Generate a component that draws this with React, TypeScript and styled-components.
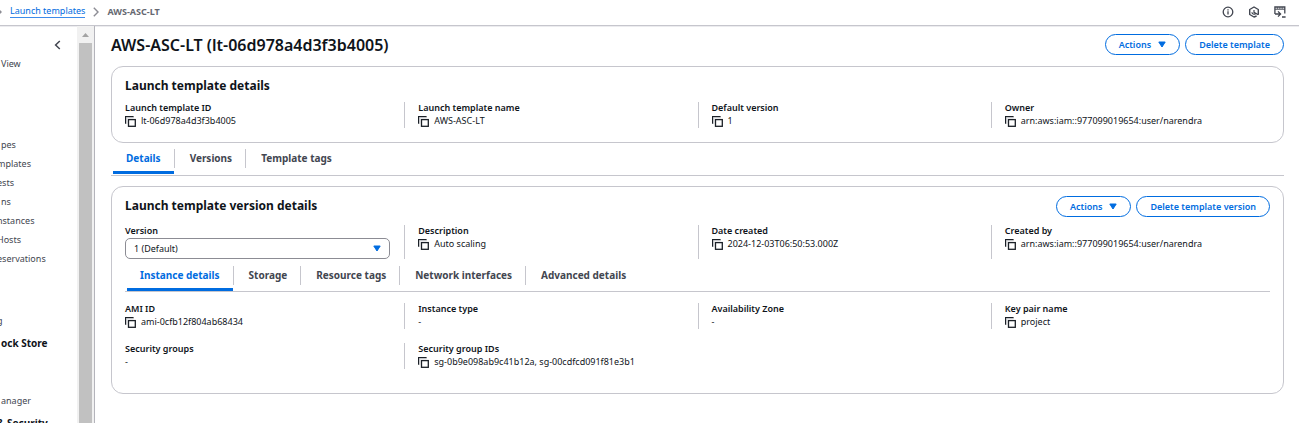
import React, { useState } from "react";
import styled, { createGlobalStyle, css } from "styled-components";

const GlobalStyle = createGlobalStyle`
  * { box-sizing: border-box; }
  body {
    margin: 0;
    background: #fff;
    color: #0f141a;
    font-family: "Noto Sans", "Open Sans", sans-serif;
    font-size: 9px;
    line-height: 13px;
  }
  button, select { font: inherit; color: inherit; }
  h1, h2, dl, dd, dt, ul, ol { margin: 0; padding: 0; }
  ul, ol { list-style: none; }
`;

const Page = styled.div`
  display: flex;
  flex-direction: column;
  height: 100vh;
  overflow: hidden;
`;

const TopBar = styled.header`
  display: flex;
  flex: none;
  align-items: center;
  justify-content: space-between;
  height: 26px;
  padding: 0 13px 2px 0;
  border-bottom: 1px solid #c6c6cd;
  box-shadow: 0 1px 0 #ececef;
`;

const Crumbs = styled.ol`
  display: flex;
  align-items: center;
`;

const Crumb = styled.li`
  display: flex;
  align-items: center;
  color: #656871;
  font-weight: 700;
`;

const CrumbLink = styled.a`
  color: #006ce0;
  font-weight: 400;
  text-decoration: none;
  border-bottom: 1px solid #3d8bea;
  line-height: 12px;
`;

const CrumbChevron = styled.svg`
  width: 6px;
  height: 10px;
  margin: 0 8px;
`;

const ClippedChevron = styled(CrumbChevron)`
  margin: 0 8px 0 -4px;
`;

const Tools = styled.div`
  display: flex;
  gap: 14px;
`;

const IconButton = styled.button`
  display: flex;
  padding: 0;
  border: 0;
  background: none;
  color: #424650;
  cursor: pointer;
`;

const Body = styled.div`
  display: flex;
  flex: 1;
  min-height: 0;
`;

const Sidebar = styled.aside`
  display: flex;
  flex: none;
  border-right: 1px solid #b4b4bb;
`;

const SideNav = styled.nav`
  width: 77px;
  overflow: hidden;
  color: #424650;
`;

const Collapse = styled.div`
  display: flex;
  justify-content: flex-end;
  padding: 14px 16px 4px 0;
`;

const NavGroup = styled.ul<{ $before?: number }>`
  padding-top: ${(p) => p.$before ?? 0}px;
`;

const NavItem = styled.li<{ $cut?: boolean }>`
  line-height: 19px;
  white-space: nowrap;
  text-indent: ${(p) => (p.$cut ? "-3px" : "1px")};
`;

const NavHeading = styled(NavItem)`
  padding-top: 4px;
  color: #0f141a;
  font-size: 10px;
  font-weight: 700;
`;

const NavLink = styled.a`
  color: inherit;
  text-decoration: none;
`;

const ScrollTrack = styled.div`
  display: flex;
  flex-direction: column;
  align-items: center;
  width: 17px;
  padding-top: 7px;
  background: #f1f1f1;
`;

const ScrollThumb = styled.div`
  flex: 1;
  width: 13px;
  margin-top: 6px;
  background: #c1c1c1;
`;

const Main = styled.main`
  flex: 1;
  min-width: 0;
  padding: 8px 15px 0 16px;
`;

const TitleRow = styled.div`
  display: flex;
  align-items: flex-start;
  justify-content: space-between;
`;

const PageTitle = styled.h1`
  font-size: 16px;
  font-weight: 600;
  line-height: 22px;
`;

const ButtonGroup = styled.div`
  display: flex;
  gap: 5px;
`;

const PillButton = styled.button`
  display: flex;
  align-items: center;
  gap: 7px;
  height: 21px;
  padding: 0 13px 1px;
  border: 1px solid #006ce0;
  border-radius: 11px;
  background: #fff;
  color: #006ce0;
  font-weight: 600;
  white-space: nowrap;
  cursor: pointer;
`;

const Card = styled.section<{ $bottom: number }>`
  margin-top: 10px;
  padding: 9px 13px ${(p) => p.$bottom}px;
  border: 1px solid #c6c6cd;
  border-radius: 12px;
`;

const CardTitle = styled.h2`
  font-size: 12px;
  font-weight: 700;
  line-height: 20px;
`;

const Columns = styled.dl<{ $top: number }>`
  display: grid;
  grid-template-columns: repeat(4, minmax(0, 1fr));
  column-gap: 28px;
  row-gap: 14px;
  padding-top: ${(p) => p.$top}px;
`;

const Field = styled.div<{ $divided?: boolean }>`
  ${(p) =>
    p.$divided &&
    css`
      margin-left: -14px;
      padding-left: 13px;
      border-left: 1px solid #c6c6cd;
    `}
`;

const Term = styled.dt`
  font-weight: 600;
  line-height: 12px;
`;

const Value = styled.dd`
  display: flex;
  align-items: flex-end;
  gap: 5px;
  padding-bottom: 1px;
  white-space: nowrap;
`;

const SelectBox = styled.dd`
  position: relative;
  padding-top: 1px;
`;

const Select = styled.select`
  display: block;
  width: 100%;
  height: 21px;
  padding: 0 20px 1px 8px;
  border: 1px solid #8c8c94;
  border-radius: 5px;
  background: #fff;
  appearance: none;
`;

const SelectArrow = styled.span`
  position: absolute;
  top: 8px;
  right: 9px;
  display: flex;
  color: #006ce0;
  pointer-events: none;
`;

const TabList = styled.div<{ $top: number; $bottom: number }>`
  display: flex;
  padding: ${(p) => p.$top}px 0 ${(p) => p.$bottom}px;
  border-bottom: 1px solid #c6c6cd;
`;

const Tab = styled.button<{ $active: boolean }>`
  margin-left: 2px;
  padding: 0;
  border: 0;
  background: none;
  color: ${(p) => (p.$active ? "#006ce0" : "#424650")};
  font-size: 10px;
  font-weight: 700;
  cursor: pointer;

  &::after {
    content: "";
    display: block;
    height: 3px;
    margin: 3px 1px 0 0;
    background: ${(p) => (p.$active ? "#006ce0" : "transparent")};
  }
`;

const TabLabel = styled.span`
  display: block;
  padding: 0 13px;
  border-right: 1px solid #c6c6cd;
  line-height: 19px;

  ${Tab}:last-child & {
    border-right-color: transparent;
  }
`;

function CaretDown() {
  return (
    <svg width="8" height="7" viewBox="0 0 8 7" aria-hidden="true">
      <path d="M.8 1h6.4L4 6z" fill="currentColor" stroke="currentColor" strokeLinejoin="round" />
    </svg>
  );
}

function CopyIcon() {
  return (
    <svg width="11" height="11" viewBox="0 0 11 11" fill="none" stroke="#1b2027" aria-hidden="true">
      <path d="M.6 7.8V.6h8" strokeWidth="1.2" />
      <path d="M1.7 7.8V1.7h6.9" stroke="#c3c5ca" strokeWidth=".9" />
      <rect x="3.5" y="3.6" width="6.8" height="6.7" strokeWidth="1.3" />
    </svg>
  );
}

function Chevron() {
  return <path d="M.8.8 5 5 .8 9.2" fill="none" stroke="#8c8c94" strokeWidth="1.4" />;
}

type FieldData = { term: string; value: string; copy?: boolean };

function Pair({ term, value, copy, divided }: FieldData & { divided: boolean }) {
  return (
    <Field $divided={divided}>
      <Term>{term}</Term>
      <Value>
        {copy && (
          <IconButton aria-label={`Copy ${term}`}>
            <CopyIcon />
          </IconButton>
        )}
        {value}
      </Value>
    </Field>
  );
}

type TabsProps = { labels: string[]; name: string; top: number; bottom: number };

function Tabs({ labels, name, top, bottom }: TabsProps) {
  const [active, setActive] = useState(0);
  return (
    <TabList role="tablist" aria-label={name} $top={top} $bottom={bottom}>
      {labels.map((label, i) => (
        <Tab key={label} role="tab" aria-selected={i === active} $active={i === active} onClick={() => setActive(i)}>
          <TabLabel>{label}</TabLabel>
        </Tab>
      ))}
    </TabList>
  );
}

const owner = "arn:aws:iam::977099019654:user/narendra";

const templateFields: FieldData[] = [
  { term: "Launch template ID", value: "lt-06d978a4d3f3b4005", copy: true },
  { term: "Launch template name", value: "AWS-ASC-LT", copy: true },
  { term: "Default version", value: "1", copy: true },
  { term: "Owner", value: owner, copy: true },
];

const versionFields: FieldData[] = [
  { term: "Description", value: "Auto scaling", copy: true },
  { term: "Date created", value: "2024-12-03T06:50:53.000Z", copy: true },
  { term: "Created by", value: owner, copy: true },
];

const instanceFields: FieldData[] = [
  { term: "AMI ID", value: "ami-0cfb12f804ab68434", copy: true },
  { term: "Instance type", value: "-" },
  { term: "Availability Zone", value: "-" },
  { term: "Key pair name", value: "project", copy: true },
  { term: "Security groups", value: "-" },
  { term: "Security group IDs", value: "sg-0b9e098ab9c41b12a, sg-00cdfcd091f81e3b1", copy: true },
];

const instanceLinks = [
  { text: "pes" },
  { text: "mplates", cut: true },
  { text: "ests", cut: true },
  { text: "ns" },
  { text: "nstances", cut: true },
  { text: "Hosts", cut: true },
  { text: "eservations", cut: true },
];

function NavEntry({ text, cut }: { text: string; cut?: boolean }) {
  return (
    <NavItem $cut={cut}>
      <NavLink href="#">{text}</NavLink>
    </NavItem>
  );
}

export default function App() {
  return (
    <Page>
      <GlobalStyle />
      <TopBar>
        <Crumbs>
          <Crumb>
            <ClippedChevron viewBox="0 0 6 10" aria-hidden="true">
              <Chevron />
            </ClippedChevron>
            <CrumbLink href="#">Launch templates</CrumbLink>
          </Crumb>
          <Crumb>
            <CrumbChevron viewBox="0 0 6 10" aria-hidden="true">
              <Chevron />
            </CrumbChevron>
            AWS-ASC-LT
          </Crumb>
        </Crumbs>
        <Tools>
          <IconButton aria-label="Info">
            <svg width="12" height="12" viewBox="0 0 12 12" fill="none" stroke="currentColor" strokeWidth="1.3">
              <circle cx="6" cy="6" r="4.8" />
              <path d="M6 5.2v3.3M6 3.2v1.2" />
            </svg>
          </IconButton>
          <IconButton aria-label="Recent activity">
            <svg width="12" height="12" viewBox="0 0 12 12" fill="none" stroke="currentColor" strokeWidth="1.4">
              <path d="M8.6 10 6 11 1.7 8.5v-5L6 1l4.3 2.5v5.2" strokeLinejoin="round" />
              <path d="M10.3 8.7 6 6.3V4M3.9 6.2a2.2 2.2 0 0 0 3.6 1.5" strokeWidth="1.2" />
            </svg>
          </IconButton>
          <IconButton aria-label="CloudShell">
            <svg width="12" height="12" viewBox="0 0 12 12" fill="none" stroke="currentColor" strokeWidth="1.3">
              <path d="M.9 8V1h9.9v6.5" />
              <path d="M1 3.2h9.8" strokeWidth="1" />
              <path d="M3.4 1v2M5.8 1v2M8.2 1v2" strokeWidth=".7" />
              <path d="M1 8h5M4 5.4 6.6 8 4 10.6M8 11h3.6" />
            </svg>
          </IconButton>
        </Tools>
      </TopBar>
      <Body>
        <Sidebar>
          <SideNav aria-label="EC2">
            <Collapse>
              <IconButton aria-label="Close navigation">
                <svg width="7" height="10" viewBox="0 0 7 10" fill="none" stroke="currentColor" strokeWidth="1.5">
                  <path d="M5.8 1 1.6 5l4.2 4" />
                </svg>
              </IconButton>
            </Collapse>
            <NavGroup>
              <NavEntry text="View" />
            </NavGroup>
            <NavGroup $before={62}>
              {instanceLinks.map((link) => (
                <NavEntry key={link.text} {...link} />
              ))}
            </NavGroup>
            <NavGroup $before={43}>
              <NavEntry text="g" cut />
              <NavHeading>ock Store</NavHeading>
            </NavGroup>
            <NavGroup $before={38}>
              <NavEntry text="anager" />
              <NavHeading $cut>&amp; Security</NavHeading>
            </NavGroup>
          </SideNav>
          <ScrollTrack aria-hidden="true">
            <svg width="7" height="4" viewBox="0 0 7 4">
              <path d="M0 4 3.5 0 7 4z" fill="#a3a3a3" />
            </svg>
            <ScrollThumb />
          </ScrollTrack>
        </Sidebar>
        <Main>
          <TitleRow>
            <PageTitle>AWS-ASC-LT (lt-06d978a4d3f3b4005)</PageTitle>
            <ButtonGroup>
              <PillButton>
                Actions <CaretDown />
              </PillButton>
              <PillButton>Delete template</PillButton>
            </ButtonGroup>
          </TitleRow>
          <Card $bottom={14}>
            <CardTitle>Launch template details</CardTitle>
            <Columns $top={6}>
              {templateFields.map((f, i) => (
                <Pair key={f.term} {...f} divided={i > 0} />
              ))}
            </Columns>
          </Card>
          <Tabs name="Launch template" labels={["Details", "Versions", "Template tags"]} top={6} bottom={1} />
          <Card $bottom={24}>
            <TitleRow>
              <CardTitle>Launch template version details</CardTitle>
              <ButtonGroup>
                <PillButton>
                  Actions <CaretDown />
                </PillButton>
                <PillButton>Delete template version</PillButton>
              </ButtonGroup>
            </TitleRow>
            <Columns $top={8}>
              <Field>
                <Term>
                  <label htmlFor="version">Version</label>
                </Term>
                <SelectBox>
                  <Select id="version">
                    <option>1 (Default)</option>
                  </Select>
                  <SelectArrow>
                    <CaretDown />
                  </SelectArrow>
                </SelectBox>
              </Field>
              {versionFields.map((f) => (
                <Pair key={f.term} {...f} divided />
              ))}
            </Columns>
            <Tabs
              name="Version details"
              labels={["Instance details", "Storage", "Resource tags", "Network interfaces", "Advanced details"]}
              top={7}
              bottom={0}
            />
            <Columns $top={11}>
              {instanceFields.map((f, i) => (
                <Pair key={f.term} {...f} divided={i % 4 > 0} />
              ))}
            </Columns>
          </Card>
        </Main>
      </Body>
    </Page>
  );
}
